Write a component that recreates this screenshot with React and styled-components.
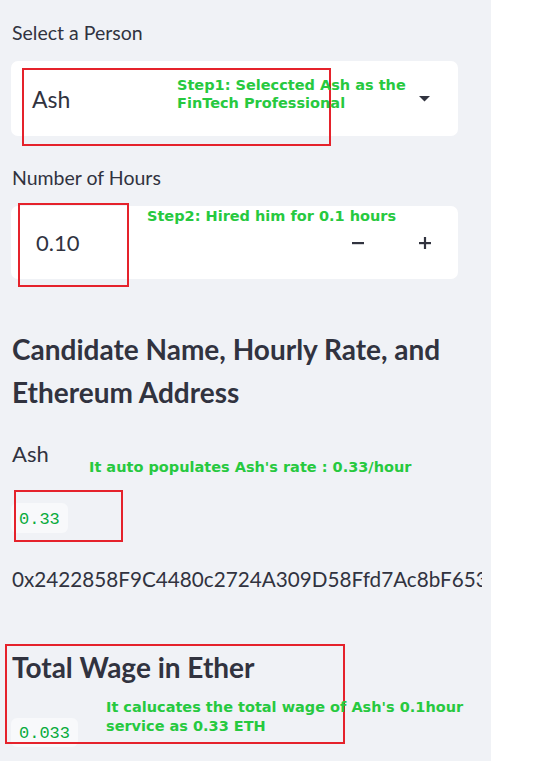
import React from "react";
import styled, { createGlobalStyle } from "styled-components";

const Global = createGlobalStyle`
  html, body { margin: 0; padding: 0; background: #ffffff; }
  body { font-family: "Lato", "Noto Sans", sans-serif; color: #31333f; }
`;

const Page = styled.div`
  position: relative;
  width: 546px;
  height: 761px;
  overflow: hidden;
  background: #ffffff;
`;

const Sidebar = styled.aside`
  width: 491px;
  height: 761px;
  background: #f0f2f6;
`;

const Clip = styled.div`
  width: 482px;
  overflow: hidden;
`;

const Content = styled.div`
  width: 447px;
  margin-left: 11px;
  padding-top: 20px;
  display: flex;
  flex-direction: column;
`;

const Field = styled.div`
  display: flex;
  flex-direction: column;
  gap: 16px;
  margin-top: ${(p) => p.$top || 0}px;
`;

const Label = styled.label`
  font-size: 19.5px;
  line-height: 25px;
  padding-left: 1px;
  color: #31333f;
`;

const SelectBox = styled.div`
  height: 75px;
  background: #ffffff;
  border-radius: 7px;
  display: flex;
  align-items: center;
  justify-content: space-between;
  padding: 0 28px 0 21px;
  box-sizing: border-box;
`;

const Value = styled.span`
  font-size: 23px;
  line-height: 32px;
  color: #31333f;
`;

const NumberBox = styled.div`
  height: 73px;
  background: #ffffff;
  border-radius: 7px;
  display: flex;
  align-items: stretch;
`;

const NumberInput = styled.div`
  flex: 1;
  display: flex;
  align-items: center;
  padding-left: 25px;
  font-size: 22px;
  color: #31333f;
`;

const StepButton = styled.div`
  width: 67px;
  display: flex;
  align-items: center;
  justify-content: center;
`;

const Heading = styled.h2`
  margin: ${(p) => p.$top}px 0 0 0;
  padding-left: 1px;
  font-size: ${(p) => p.$size}px;
  line-height: 43px;
  font-weight: 700;
  color: #31333f;
`;

const Text = styled.div`
  margin-top: ${(p) => p.$top}px;
  padding-left: 1px;
  font-size: ${(p) => p.$size}px;
  line-height: ${(p) => p.$lh}px;
  white-space: nowrap;
  color: #31333f;
`;

const Code = styled.code`
  align-self: flex-start;
  margin-top: ${(p) => p.$top}px;
  height: ${(p) => p.$h}px;
  display: flex;
  align-items: center;
  padding: 2px 8px 0;
  box-sizing: border-box;
  background: #f8f9fb;
  border-radius: 6px;
  font-family: "Liberation Mono", "DejaVu Sans Mono", monospace;
  font-size: 17px;
  color: #09ab3b;
`;

const RedBox = styled.div`
  position: absolute;
  box-sizing: border-box;
  border: 2px solid #e5222b;
  pointer-events: none;
`;

const Note = styled.div`
  position: absolute;
  font-family: "DejaVu Sans", "Verdana", sans-serif;
  font-weight: 700;
  font-size: 14.5px;
  line-height: ${(p) => p.$lh || 18}px;
  color: #27c93f;
  white-space: nowrap;
`;

const Caret = () => (
  <svg width="11" height="6" viewBox="0 0 11 6">
    <polygon points="0,0 11,0 5.5,5.5" fill="#31333f" />
  </svg>
);

const Minus = () => (
  <svg width="12" height="12" viewBox="0 0 12 12">
    <rect x="0" y="5" width="12" height="2.2" fill="#31333f" />
  </svg>
);

const Plus = () => (
  <svg width="12" height="12" viewBox="0 0 12 12">
    <rect x="0" y="5" width="12" height="2.2" fill="#31333f" />
    <rect x="4.9" y="0" width="2.2" height="12" fill="#31333f" />
  </svg>
);

export default function App() {
  return (
    <Page>
      <Global />
      <Sidebar>
        <Clip>
          <Content>
            <Field>
              <Label>Select a Person</Label>
              <SelectBox>
                <Value>Ash</Value>
                <Caret />
              </SelectBox>
            </Field>
            <Field $top={29}>
              <Label>Number of Hours</Label>
              <NumberBox>
                <NumberInput>0.10</NumberInput>
                <StepButton>
                  <Minus />
                </StepButton>
                <StepButton>
                  <Plus />
                </StepButton>
              </NumberBox>
            </Field>
            <Heading $top={49} $size={28}>
              Candidate Name, Hourly Rate, and Ethereum Address
            </Heading>
            <Text $top={24} $size={22} $lh={32}>
              Ash
            </Text>
            <Code $top={33} $h={30}>
              0.33
            </Code>
            <Text $top={31} $size={20.7} $lh={30}>
              0x2422858F9C4480c2724A309D58Ffd7Ac8bF653a1
            </Text>
            <Heading $top={52} $size={28}>
              Total Wage in Ether
            </Heading>
            <Code $top={29} $h={29}>
              0.033
            </Code>
          </Content>
        </Clip>
      </Sidebar>

      <RedBox style={{ left: 22, top: 68, width: 309, height: 78 }} />
      <Note style={{ left: 177, top: 76 }}>
        Step1: Seleccted Ash as the
        <br />
        FinTech Professional
      </Note>

      <RedBox style={{ left: 18, top: 203, width: 111, height: 84 }} />
      <Note style={{ left: 147, top: 207 }}>Step2: Hired him for 0.1 hours</Note>

      <Note style={{ left: 89, top: 458 }}>It auto populates Ash's rate : 0.33/hour</Note>
      <RedBox style={{ left: 14, top: 490, width: 109, height: 52 }} />

      <RedBox style={{ left: 5, top: 644, width: 340, height: 100 }} />
      <Note $lh={19} style={{ left: 106, top: 698 }}>
        It calucates the total wage of Ash's 0.1hour
        <br />
        service as 0.33 ETH
      </Note>
    </Page>
  );
}
